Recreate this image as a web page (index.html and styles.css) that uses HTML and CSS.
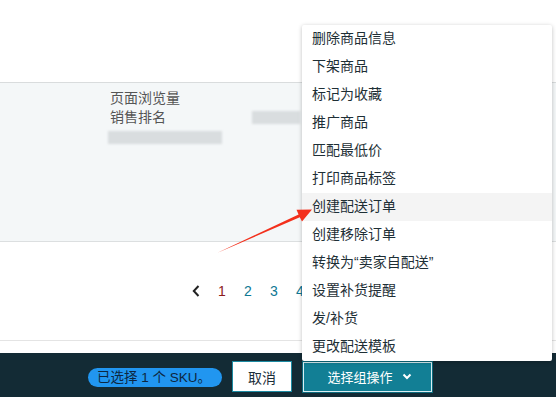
FILE: index.html
```html
<!doctype html>
<html lang="zh-CN">
	<head>
		<meta charset="UTF-8">
		<meta name="viewport" content="width=device-width, initial-scale=1.0">
		<title>管理库存</title>
		<link rel="stylesheet" href="styles.css">
	</head>
	<body>

		<div class="top"></div>

		<div class="panel">
			<div class="stats">
				<span class="label">页面浏览量</span>
				<span class="value"></span>
				<span class="label">销售排名</span>
				<span class="value"><i class="blur blur-short"></i></span>
				<span class="label"><i class="blur blur-long"></i></span>
				<span class="value"></span>
			</div>
		</div>

		<div class="pager">
			<span class="page prev">
				<svg width="8" height="12" viewBox="0 0 8 12"><path d="M6.5 1 L1.8 6 L6.5 11" fill="none" stroke="#222" stroke-width="2"/></svg>
			</span>
			<span class="page current">1</span>
			<span class="page">2</span>
			<span class="page">3</span>
			<span class="page">4</span>
		</div>

		<div class="gap"></div>

		<div class="bar">
			<span class="pill">已选择 1 个 SKU。</span>
			<button type="button" class="btn-cancel">取消</button>
			<button type="button" class="btn-group">选择组操作
				<svg width="10" height="7" viewBox="0 0 10 7"><path d="M1.5 1.5 L5 5 L8.5 1.5" fill="none" stroke="#fff" stroke-width="2"/></svg>
			</button>
		</div>

		<!-- dropdown of the group button -->
		<ul class="menu">
			<li>删除商品信息</li>
			<li>下架商品</li>
			<li>标记为收藏</li>
			<li>推广商品</li>
			<li>匹配最低价</li>
			<li>打印商品标签</li>
			<li class="hover">创建配送订单</li>
			<li>创建移除订单</li>
			<li>转换为“卖家自配送”</li>
			<li>设置补货提醒</li>
			<li>发/补货</li>
			<li>更改配送模板</li>
		</ul>

		<svg class="arrow" width="556" height="397" viewBox="0 0 556 397">
			<polygon points="217,253 298.6,214.4 296.5,209.8 312,209.6 302,221.6 299.8,217.2" fill="#f3301c"/>
		</svg>

	</body>
</html>
```

FILE: styles.css
```css
*{
	box-sizing:border-box;
}

body{
	margin:0;
	width:556px;
	height:397px;
	overflow:hidden;
	position:relative;
	background:#fff;
	font-family:"Liberation Sans","Noto Sans CJK SC",sans-serif;
	font-size:14px;
}

.top{
	height:82px;
}

.panel{
	height:160px;
	background:#f4f7f8;
	border-top:1px solid #d9dcdd;
	border-bottom:1px solid #dcdfe0;
	padding:6px 0 0 110px;
}

.stats{
	display:grid;
	grid-template-columns:142px 60px;
	grid-auto-rows:19px;
	color:#555;
	line-height:19px;
}

.blur{
	display:inline-block;
	height:13px;
	background:#d9dddf;
	filter:blur(1px);
	vertical-align:middle;
}

.blur-short{
	width:48px;
	margin-top:-1px;
}

.blur-long{
	width:114px;
	margin-left:-2px;
}

.pager{
	height:99px;
	display:flex;
	align-items:center;
	padding-left:183px;
	border-bottom:1px solid #e4e4e4;
}

.page{
	width:26px;
	text-align:center;
	color:#0e7893;
	font-size:14px;
}

.page.prev{
	display:flex;
	justify-content:center;
}

.page.current{
	color:#8c1c1c;
}

.gap{
	height:12px;
}

.bar{
	height:44px;
	background:#132b35;
	display:flex;
	align-items:center;
	padding:3px 0 0 88px;
}

.pill{
	background:#2196f0;
	color:#0d2740;
	border-radius:10px;
	height:19px;
	line-height:19px;
	padding:0 0 0 9px;
	font-size:13.5px;
	width:134px;
	white-space:nowrap;
	margin-top:2px;
}

.btn-cancel{
	margin-left:10px;
	width:60px;
	height:31px;
	background:#fff;
	border:1px solid #1b8aa2;
	color:#1b2f3a;
	font-family:inherit;
	font-size:14px;
	padding:0;
}

.btn-group{
	margin-left:11px;
	width:129px;
	height:30px;
	background:#127f95;
	border:1px solid #dbeef2;
	box-shadow:0 0 0 1px #0d6b7e;
	color:#fff;
	font-family:inherit;
	font-size:13px;
	padding:0 0 0 4px;
	display:flex;
	align-items:center;
	justify-content:center;
	gap:9px;
}

.menu{
	position:absolute;
	left:302px;
	top:25px;
	width:250px;
	margin:0;
	padding:0;
	list-style:none;
	background:#fff;
	border-radius:2px;
	box-shadow:0 1px 4px rgba(0,0,0,.25);
}

.menu li{
	height:28px;
	line-height:27px;
	padding-left:10px;
	color:#1e2f36;
	font-size:14px;
}

.menu li.hover{
	background:#f4f4f4;
}

.arrow{
	position:absolute;
	left:0;
	top:0;
	pointer-events:none;
}
```
